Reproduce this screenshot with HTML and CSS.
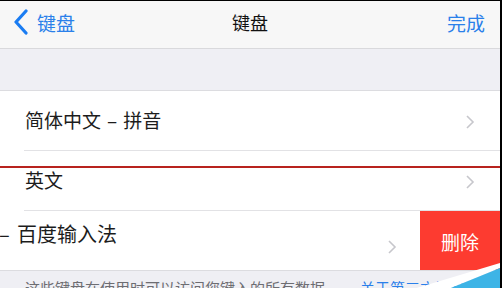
FILE: index.html
```html
<!DOCTYPE html>
<html lang="zh">
<head>
<meta charset="utf-8">
<link rel="stylesheet" href="styles.css">
</head>
<body>
<div class="screen">
  <div class="nav">
    <div class="back">
      <svg class="back-icon" width="16" height="26" viewBox="0 0 16 26"><polyline points="13,2 3,13 13,24" fill="none" stroke="#1a7cf2" stroke-width="3.2" stroke-linecap="round" stroke-linejoin="round"/></svg>
      <span>键盘</span>
    </div>
    <div class="title">键盘</div>
    <div class="done">完成</div>
  </div>
  <div class="spacer"></div>
  <div class="group">
    <div class="row">
      <span class="label">简体中文<span class="dash">–</span>拼音</span>
      <svg class="chev" width="10" height="16" viewBox="0 0 10 16"><polyline points="2,2 8,8 2,14" fill="none" stroke="#c7c7cc" stroke-width="1.6"/></svg>
    </div>
    <div class="sep"></div>
    <div class="row row-en">
      <div class="redline"></div>
      <span class="label">英文</span>
      <svg class="chev" width="10" height="16" viewBox="0 0 10 16"><polyline points="2,2 8,8 2,14" fill="none" stroke="#c7c7cc" stroke-width="1.6"/></svg>
    </div>
    <div class="sep"></div>
    <div class="row row-swipe">
      <div class="swipe-content">
        <span class="label label-shift"><span class="minus">–</span>百度输入法</span>
        <svg class="chev chev-shift" width="10" height="16" viewBox="0 0 10 16"><polyline points="2,2 8,8 2,14" fill="none" stroke="#c7c7cc" stroke-width="1.6"/></svg>
      </div>
      <div class="delete">删除</div>
    </div>
  </div>
  <div class="footer">
    <p class="note">这些键盘在使用时可以访问您键入的所有数据。<span class="link">关于第三方键盘与隐私</span></p>
    <svg class="curl" width="92" height="30" viewBox="0 0 92 30"><polygon points="0,30 90,3 90,8 36,30" fill="#ffffff"/><polygon points="36,30 90,8 90,30" fill="#3db4e6"/></svg>
  </div>
</div>
</body>
</html>
```
FILE: styles.css
```css
* { box-sizing: border-box; }
html, body { margin: 0; padding: 0; background: #000; }
body { width: 502px; height: 288px; overflow: hidden; font-family: "Noto Sans CJK SC", "Noto Sans", sans-serif; }
.screen {
  position: relative;
  width: 500px;
  height: 287px;
  margin-top: 1px;
  background: #efeff4;
  overflow: hidden;
}
.nav {
  height: 48px;
  background: #f7f7f7;
  border-bottom: 1px solid #d9d9dc;
  display: grid;
  grid-template-columns: 1fr auto 1fr;
  align-items: center;
}
.back {
  display: flex;
  align-items: center;
  gap: 8px;
  padding-left: 13px;
  color: #2a80ea;
  font-size: 19px;
  margin-top: -5px;
}
.back-icon { display: block; }
.title { font-size: 18px; color: #111; margin-top: -5px; }
.done { justify-self: end; padding-right: 15px; color: #2a80ea; font-size: 19px; margin-top: -5px; }
.spacer { height: 42px; border-bottom: 1px solid #dcdce0; }
.group { background: #fff; }
.row {
  position: relative;
  height: 59px;
  display: flex;
  align-items: center;
  justify-content: space-between;
  padding-left: 25px;
  padding-right: 25px;
}
.label { font-size: 19px; color: #1c1c1c; margin-top: -3px; }
.dash { display: inline-block; margin: 0 6px; }
.row-en .label { margin-top: -2px; }
.chev { display: block; margin-top: 2px; }
.sep { height: 1px; background: #e2e2e5; margin-left: 24px; }
.redline {
  position: absolute;
  left: -2px; right: 0;
  top: 15px;
  height: 2px;
  background: #b8231e;
}
.row-swipe { padding: 0; }
.swipe-content {
  flex: 1;
  height: 100%;
  display: flex;
  align-items: center;
  justify-content: space-between;
  padding-right: 23px;
}
.label-shift { margin-top: -14px; font-size: 20px; }
.minus { display: inline-block; width: 18px; margin-left: -1px; }
.chev-shift { margin-top: 12px; }
.delete {
  width: 80px;
  height: 100%;
  background: #fd3b30;
  color: #fff;
  font-size: 19px;
  display: flex;
  align-items: center;
  justify-content: center;
  padding-top: 2px;
}
.footer {
  position: relative;
  border-top: 1px solid #dcdce0;
  height: 20px;
}
.note {
  margin: 0;
  padding: 6px 0 0 25px;
  font-size: 15px;
  color: #6d6d72;
  white-space: nowrap;
}
.link { color: #2a80ea; margin-left: 20px; }
.curl { position: absolute; right: -2px; bottom: 0; display: block; }
```
